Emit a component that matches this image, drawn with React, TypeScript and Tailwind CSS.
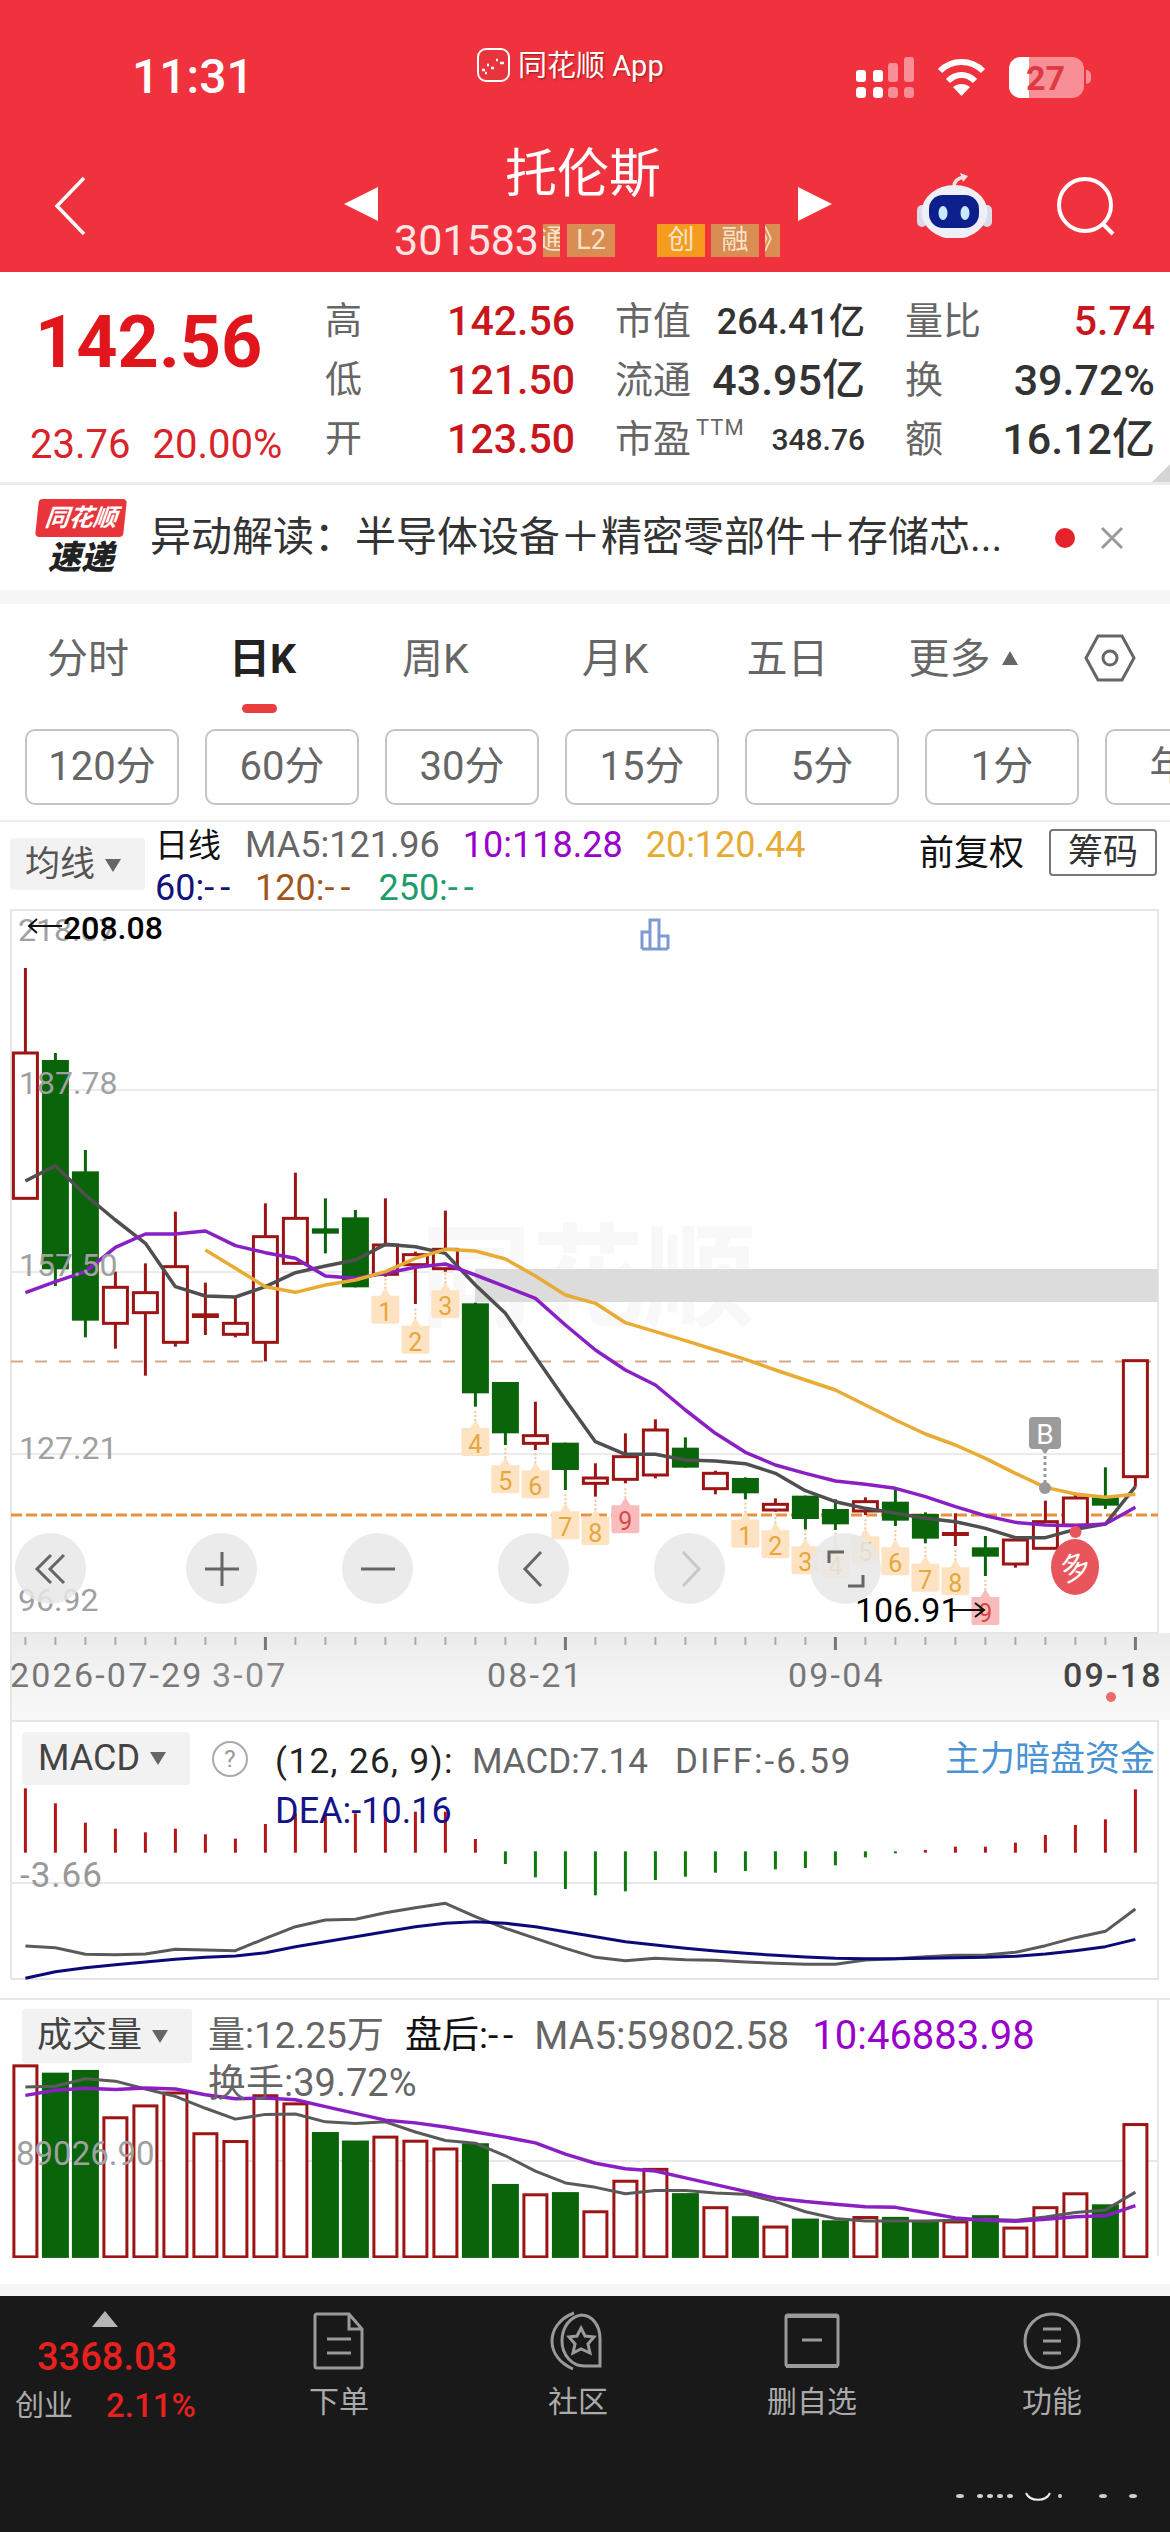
import React from "react";

const X = (i: number) => 25.4 + 30 * i;
const Y = (z: number) => 1150 + z / 3;
const MY = (z: number) => 1670 + z / 3;
const VY = (z: number) => 2000 + z / 2.947;

type C = [string, number, number, number, number];
const candles: C[] = [
  ["r", -546, -291, 145, 145],
  ["g", -291, -270, 358, 408],
  ["g", 0, 64, 512, 562],
  ["r", 365, 412, 520, 596],
  ["r", 340, 428, 488, 677],
  ["r", 185, 350, 577, 590],
  ["s", 398, 490, 504, 555],
  ["r", 440, 520, 553, 562],
  ["r", 160, 260, 577, 634],
  ["r", 68, 205, 340, 340],
  ["g", 145, 235, 251, 310],
  ["g", 180, 202, 412, 412],
  ["r", 145, 285, 373, 380],
  ["r", 305, 314, 344, 462],
  ["r", 182, 298, 356, 365],
  ["g", 458, 460, 730, 770],
  ["g", 696, 696, 850, 885],
  ["r", 755, 857, 880, 900],
  ["g", 878, 878, 960, 1020],
  ["r", 940, 984, 1000, 1040],
  ["r", 850, 920, 988, 1000],
  ["r", 808, 840, 975, 985],
  ["g", 862, 893, 953, 953],
  ["r", 962, 970, 1016, 1033],
  ["g", 982, 984, 1030, 1048],
  ["r", 1045, 1063, 1080, 1085],
  ["g", 1037, 1037, 1107, 1138],
  ["g", 1048, 1077, 1123, 1140],
  ["r", 1042, 1055, 1083, 1095],
  ["g", 1020, 1055, 1112, 1128],
  ["g", 1087, 1092, 1166, 1180],
  ["s", 1090, 1146, 1158, 1188],
  ["g", 1158, 1192, 1220, 1278],
  ["r", 1170, 1170, 1242, 1253],
  ["r", 1052, 1115, 1195, 1195],
  ["r", 1028, 1044, 1125, 1125],
  ["g", 952, 1042, 1067, 1077],
  ["r", 632, 632, 980, 1010],
];

const ma5 = [93, 47, 135, 210, 280, 410, 438, 441, 410, 368, 348, 330, 283, 290, 310, 405, 490, 620, 750, 875, 913, 913, 930, 933, 941, 970, 1022, 1055, 1075, 1090, 1105, 1115, 1135, 1163, 1163, 1138, 1122, 1010];
const ma10 = [428, 395, 365, 292, 252, 252, 243, 287, 308, 325, 378, 385, 370, 352, 342, 375, 410, 445, 525, 600, 660, 705, 780, 850, 907, 945, 970, 993, 1003, 1015, 1040, 1070, 1097, 1117, 1125, 1127, 1122, 1072];
const ma20 = [300, 355, 410, 427, 405, 390, 365, 325, 298, 303, 327, 378, 435, 460, 518, 545, 572, 600, 628, 660, 690, 720, 765, 810, 852, 885, 925, 970, 1012, 1032, 1042, 1033];

const badges: [number, number, string][] = [
  [12, 428, "1"], [13, 518, "2"], [14, 412, "3"], [15, 825, "4"], [16, 937, "5"], [17, 952, "6"],
  [18, 1075, "7"], [19, 1092, "8"], [20, 1057, "9"], [24, 1100, "1"], [25, 1132, "2"], [26, 1180, "3"],
  [27, 1190, "4"], [28, 1150, "5"], [29, 1183, "6"], [30, 1232, "7"], [31, 1243, "8"], [32, 1332, "9"],
];

const macdBars = [355, 400, 458, 476, 487, 476, 493, 506, 462, 430, 430, 430, 430, 425, 425, 507, 582, 622, 657, 676, 664, 630, 620, 608, 603, 598, 594, 586, 562, 550, 540, 530, 530, 518, 495, 465, 448, 358];
const macdGray = [828, 833, 853, 854, 852, 838, 840, 842, 805, 770, 750, 748, 728, 713, 700, 740, 775, 805, 835, 862, 872, 865, 869, 871, 876, 880, 883, 883, 870, 866, 860, 856, 855, 847, 827, 803, 784, 717];
const macdNavy = [925, 905, 893, 884, 876, 868, 862, 858, 848, 830, 815, 800, 785, 770, 760, 755, 760, 770, 785, 800, 815, 825, 835, 843, 850, 856, 861, 865, 866, 866, 865, 863, 862, 859, 852, 842, 830, 808];

const vol: [string, number][] = [["r", 200], ["g", 220], ["g", 212], ["r", 353], ["r", 318], ["r", 280], ["r", 400], ["r", 423], ["r", 288], ["r", 312], ["g", 395], ["g", 420], ["r", 410], ["r", 422], ["r", 445], ["g", 428], ["g", 548], ["r", 580], ["g", 572], ["r", 630], ["r", 540], ["r", 505], ["g", 575], ["r", 618], ["g", 643], ["r", 675], ["g", 650], ["g", 655], ["r", 647], ["g", 645], ["g", 655], ["r", 660], ["g", 640], ["r", 678], ["r", 618], ["r", 577], ["g", 608], ["r", 373]];
const volGray = [262, 260, 238, 245, 268, 290, 325, 357, 343, 342, 365, 370, 365, 395, 420, 428, 465, 510, 545, 558, 577, 567, 567, 575, 578, 600, 630, 650, 657, 657, 657, 655, 652, 655, 645, 632, 625, 572];
const volPurple = [287, 272, 266, 270, 265, 268, 285, 297, 295, 300, 320, 340, 360, 368, 380, 395, 410, 427, 460, 487, 503, 510, 530, 550, 570, 590, 600, 608, 615, 617, 632, 648, 655, 658, 652, 645, 642, 612];

const line = (vals: number[], map: (z: number) => number, start = 0) =>
  vals.map((v, k) => `${X(k + start)},${map(v)}`).join(" ");

const RED = "#9c1414";
const GREEN = "#0a640a";

function MainChart() {
  return (
    <svg viewBox="0 909 1170 811" className="absolute inset-0 h-[811px] w-[1170px]">
      <defs>
        <linearGradient id="strip" x1="0" y1="0" x2="0" y2="1">
          <stop offset="0" stopColor="#ebebeb" />
          <stop offset="0.55" stopColor="#f4f4f4" />
          <stop offset="1" stopColor="#f8f8f8" />
        </linearGradient>
      </defs>
      <rect x="10" y="1633" width="1160" height="87" fill="url(#strip)" />
      <path d="M11 1720V910H1158V1633M11 1633H1158" fill="none" stroke="#e6e6e6" strokeWidth="2" />
      <path d="M11 1090H1158M11 1272H1158M11 1454H1158" stroke="#ebebeb" strokeWidth="2" />
      <text x="420" y="1318" fontSize="112" fontWeight="700" fill="#f8f8f8">同花顺</text>
      <rect x="475" y="1269" width="683" height="33" fill="#dcdcdc" />
      <path d="M11 1361.5H1158" stroke="#d3a888" strokeWidth="2" strokeDasharray="12 12" />
      <path d="M11 1515H1158" stroke="#e8913f" strokeWidth="3" strokeDasharray="11 4" />
      {badges.map(([i, top, n], k) => {
        const x = X(i);
        const y = Y(top);
        const pink = n === "9";
        const fill = pink ? "#f8bcbc" : "#fde3c2";
        return (
          <g key={k}>
            <path d={`M${x - 14} ${y + 3}h9l5 -8l5 8h9v26a2 2 0 0 1 -2 2h-24a2 2 0 0 1 -2 -2z`} fill={fill} />
            <path d={`M${x} ${y - 14}v10`} stroke="#eec79a" strokeWidth="2" strokeDasharray="2 2" />
            <text x={x} y={y + 28} textAnchor="middle" fontSize="25" fill={pink ? "#d84a4a" : "#e8a63e"}>{n}</text>
          </g>
        );
      })}
      {candles.map(([t, wt, bt, bb, wb], i) => {
        const x = X(i);
        const c = t === "g" ? GREEN : RED;
        return (
          <g key={i}>
            <path d={`M${x} ${Y(wt)}V${Y(wb)}`} stroke={c} strokeWidth="3" />
            {t === "g" && <rect x={x - 13.5} y={Y(bt)} width="27" height={Y(bb) - Y(bt)} fill={c} />}
            {t === "r" && <rect x={x - 12} y={Y(bt)} width="24" height={Y(bb) - Y(bt)} fill="#fff" stroke={c} strokeWidth="3" />}
            {t === "s" && <rect x={x - 13.5} y={Y(bt)} width="27" height={Y(bb) - Y(bt)} fill={c} />}
          </g>
        );
      })}
      <polyline points={line(ma5, Y)} fill="none" stroke="#4f4f4f" strokeWidth="3.5" strokeLinejoin="round" />
      <polyline points={line(ma10, Y)} fill="none" stroke="#8a1fc4" strokeWidth="3.5" strokeLinejoin="round" />
      <polyline points={line(ma20, Y, 6)} fill="none" stroke="#e8ac35" strokeWidth="3.5" strokeLinejoin="round" />
      <g fill="#a0a0a0" fontSize="32">
        <text x="18" y="941">218.07</text>
        <text x="19" y="1094">187.78</text>
        <text x="19" y="1276">157.50</text>
        <text x="19" y="1459">127.21</text>
        <text x="18" y="1611">96.92</text>
      </g>
      <path d="M29 926H62M37 919L29 926L37 933" fill="none" stroke="#111" strokeWidth="2" />
      <text x="63" y="939" fontSize="32" fontWeight="500" fill="#000">208.08</text>
      <path d="M642 949V932H650V949M650 949V920H659V949M659 949V936H668V949M642 949H668" fill="none" stroke="#7d9bd0" strokeWidth="3" />
      <path d="M1045 1450V1483" stroke="#999" strokeWidth="3" strokeDasharray="3 3" />
      <circle cx="1045" cy="1488" r="6" fill="#999" />
      <path d="M1033 1417h24a4 4 0 0 1 4 4v24a4 4 0 0 1 -4 4h-8l-4 5l-4 -5h-8a4 4 0 0 1 -4 -4v-24a4 4 0 0 1 4 -4z" fill="#9b9b9b" />
      <text x="1045" y="1444" textAnchor="middle" fontSize="28" fill="#fff">B</text>
      <circle cx="1075.5" cy="1532" r="6" fill="#e8555a" />
      <ellipse cx="1075" cy="1567" rx="24" ry="28" fill="#e8555a" />
      <text x="1075" y="1578" textAnchor="middle" fontSize="30" fill="#fff" transform="rotate(-20 1075 1567)">多</text>
      <text x="855" y="1622" fontSize="34" fill="#000">106.91</text>
      <path d="M952 1610H984M975 1603L984 1610L975 1617" fill="none" stroke="#111" strokeWidth="2" />
      {candles.map((_, i) => {
        const major = i === 8 || i === 18 || i === 27 || i === 37;
        return <path key={i} d={`M${X(i)} 1637V${major ? 1650 : 1645}`} stroke={major ? "#777" : "#aaa"} strokeWidth={major ? 3 : 2} />;
      })}
      <g fontSize="34" fill="#777" letterSpacing="2.2">
        <text x="10" y="1687">2026-07-29</text>
        <text x="212" y="1687" fill="#888">3-07</text>
        <text x="487" y="1687">08-21</text>
        <text x="788" y="1687">09-04</text>
        <text x="1063" y="1687" fill="#444" fontWeight="500">09-18</text>
      </g>
      <circle cx="1111" cy="1697" r="5" fill="#ee6a6a" />
    </svg>
  );
}

function Round({ className, children }: { className: string; children: React.ReactNode }) {
  return (
    <div className={`absolute top-[624px] flex h-[71px] w-[71px] items-center justify-center rounded-full bg-[#e8e8e8]/85 ${className}`}>
      <svg viewBox="0 0 40 40" className="h-[40px] w-[40px]" fill="none" stroke="currentColor" strokeWidth="3">
        {children}
      </svg>
    </div>
  );
}

function MacdChart() {
  return (
    <svg viewBox="0 1720 1170 260" className="absolute inset-0 h-[260px] w-[1170px]">
      <path d="M11 1979V1721H1158V1979H11" fill="none" stroke="#e6e6e6" strokeWidth="2" />
      <path d="M11 1883H1158" stroke="#e8e8e8" strokeWidth="2" />
      {macdBars.map((z, i) => {
        const g = i >= 16 && i <= 29;
        return <rect key={i} x={X(i) - 1.5} width="3" y={g ? MY(544) : MY(z)} height={g ? MY(z) - MY(544) : MY(548) - MY(z)} fill={g ? "#0b7a0b" : "#b51414"} />;
      })}
      <text x="20" y="1887" fontSize="35" fill="#999" letterSpacing="1">-3.66</text>
      <polyline points={line(macdGray, MY)} fill="none" stroke="#5a5a5a" strokeWidth="3" strokeLinejoin="round" />
      <polyline points={line(macdNavy, MY)} fill="none" stroke="#0a0a78" strokeWidth="3" strokeLinejoin="round" />
    </svg>
  );
}

function VolChart() {
  return (
    <svg viewBox="0 2002 1170 258" className="absolute inset-0 h-[258px] w-[1170px]">
      <path d="M11 2163H1158" stroke="#e8e8e8" strokeWidth="2" />
      <path d="M1158 2002V2258" stroke="#e8e8e8" strokeWidth="2" />
      {vol.map(([t, z], i) =>
        t === "g" ? (
          <rect key={i} x={X(i) - 13.5} y={VY(z)} width="27" height={VY(763) - VY(z) + 1} fill={GREEN} />
        ) : (
          <rect key={i} x={X(i) - 11.5} y={VY(z)} width="23" height={VY(763) - VY(z)} fill="#fff" stroke={RED} strokeWidth="3" />
        )
      )}
      <text x="16" y="2167" fontSize="33" fill="#a0a0a0">89026.90</text>
      <polyline points={line(volGray, VY)} fill="none" stroke="#5a5a5a" strokeWidth="3" strokeLinejoin="round" />
      <polyline points={line(volPurple, VY)} fill="none" stroke="#8a1fc4" strokeWidth="3.5" strokeLinejoin="round" />
    </svg>
  );
}

function Robot() {
  return (
    <svg viewBox="0 0 75 66" className="ml-[85px] h-[66px] w-[75px]">
      <path d="M37 15c0-6 4-9 10-10" fill="none" stroke="#f3dfe2" strokeWidth="3.5" />
      <path d="M43 1L51 4L46 10Z" fill="#f3dfe2" />
      <rect x="0" y="33" width="10" height="22" rx="5" fill="#d9dce6" />
      <rect x="65" y="33" width="10" height="22" rx="5" fill="#d9dce6" />
      <ellipse cx="37.5" cy="40" rx="33" ry="27" fill="#eef0f6" />
      <rect x="12" y="23" width="50" height="33" rx="14" fill="#0d1f8c" />
      <ellipse cx="26" cy="41" rx="4.5" ry="7" fill="#c8e8ff" />
      <ellipse cx="48" cy="41" rx="4.5" ry="7" fill="#c8e8ff" />
    </svg>
  );
}

function Tag({ children, className }: { children: React.ReactNode; className: string }) {
  return <span className={`flex h-[33px] items-center justify-center overflow-hidden text-[27px] leading-none text-[#f7e3cb] ${className}`}>{children}</span>;
}

function Row({ children }: { children: React.ReactNode }) {
  return <div className="flex h-[59px] items-center justify-between whitespace-nowrap">{children}</div>;
}

function NavItem({ label, className, children }: { label: string; className: string; children: React.ReactNode }) {
  return (
    <div className={`flex w-[120px] flex-col items-center ${className}`}>
      <svg viewBox="0 0 60 60" className="h-[60px] w-[60px]" fill="none" stroke="#9a9a9a" strokeWidth="3">
        {children}
      </svg>
      <span className="mt-[13px] text-[30px] leading-[36px] text-[#aaa]">{label}</span>
    </div>
  );
}

export default function App() {
  const tab = "text-[41px] leading-[50px] text-[#666]";
  const chip = "flex h-[76px] w-[154px] shrink-0 items-center justify-center rounded-[10px] border-2 border-[#c4c4c4] text-[40px] text-[#666]";
  return (
    <div className="flex h-[2532px] w-[1170px] flex-col overflow-hidden bg-white font-[Roboto,'Noto_Sans_CJK_SC',sans-serif]">
      {/* red header */}
      <header className="h-[272px] shrink-0 bg-[#ef323d] text-white">
        <div className="flex h-[140px] pt-[48px]">
          <span className="ml-[132px] w-[345px] text-[48px] font-medium leading-[58px]">11:31</span>
          <svg viewBox="0 0 33 34" className="h-[34px] w-[33px]">
            <rect x="1" y="1" width="31" height="32" rx="8" fill="#e8343c" stroke="#fff" strokeWidth="2" />
            <path d="M5 22h3M10 17h2M14 20h3M19 12h2M23 15h4M8 25h2" stroke="#fff" strokeWidth="2.5" />
          </svg>
          <span className="ml-[8px] w-[160px] whitespace-nowrap text-[29px] leading-[36px] text-white [text-shadow:1px_1px_2px_rgba(80,0,0,0.5)]">同花顺 App</span>
          <svg viewBox="0 0 58 41" className="ml-[178px] mt-[9px] h-[41px] w-[58px]">
            <g fill="#fff">
              <rect x="0" y="13" width="10" height="12" rx="3" />
              <rect x="0" y="30" width="10" height="11" rx="3.5" />
              <rect x="17" y="13" width="10" height="12" rx="3" />
              <rect x="17" y="30" width="10" height="11" rx="3.5" />
            </g>
            <g fill="#f98f96">
              <rect x="32" y="6" width="10" height="19" rx="3" />
              <rect x="32" y="30" width="10" height="11" rx="3.5" />
              <rect x="48" y="0" width="10" height="25" rx="3" />
              <rect x="48" y="30" width="10" height="11" rx="3.5" />
            </g>
          </svg>
          <svg viewBox="0 0 49 38" className="ml-[23px] mt-[10px] h-[38px] w-[49px]" fill="none" stroke="#fff" strokeWidth="6">
            <path d="M3 13C15 1 34 1 46 13" />
            <path d="M11 23C19 15 30 15 38 23" />
            <path d="M24.5 38L16 29C21 25 28 25 33 29Z" fill="#fff" stroke="none" />
          </svg>
          <div className="relative ml-[23px] mt-[9px] flex h-[41px] w-[75px] items-center overflow-hidden rounded-[12px] bg-[#f98f96]">
            <div className="h-full w-[20px] bg-white" />
            <span className="absolute left-[17px] text-[34px] font-bold leading-none text-[#df3a44]">27</span>
          </div>
          <div className="ml-[2px] mt-[22px] h-[14px] w-[5px] rounded-r-full bg-[#f98f96]" />
        </div>
        <div className="flex h-[132px]">
          <svg viewBox="0 0 32 60" className="ml-[54px] mt-[36px] h-[60px] w-[32px]" fill="none" stroke="#fff" strokeWidth="3.5">
            <path d="M30 2L3 30L30 58" />
          </svg>
          <div className="ml-[258px] mt-[47px] h-0 w-0 border-y-[17px] border-r-[34px] border-y-transparent border-r-white" />
          <div className="ml-[16px] flex w-[404px] flex-col">
            <span className="mt-[4px] pl-[111px] text-[52px] leading-[62px]">托伦斯</span>
            <div className="mt-[18px] flex items-center">
              <span className="w-[144px] text-[43px] leading-[33px] text-[#fbe4e6]">301583</span>
              <Tag className="ml-[5px] w-[17px] bg-[#d98d52]">通</Tag>
              <Tag className="ml-[7px] w-[48px] bg-[#d98d52]">L2</Tag>
              <Tag className="ml-[42px] w-[48px] bg-[#f59b1e]">创</Tag>
              <Tag className="ml-[6px] w-[48px] bg-[#d98d52]">融</Tag>
              <Tag className="ml-[6px] w-[15px] bg-[#d98d52]">》</Tag>
            </div>
          </div>
          <div className="mt-[47px] h-0 w-0 border-y-[17px] border-l-[34px] border-y-transparent border-l-white" />
          <div className="mt-[32px]">
            <Robot />
          </div>
          <svg viewBox="0 0 60 60" className="ml-[65px] mt-[37px] h-[60px] w-[60px]" fill="none" stroke="#fff" strokeWidth="4">
            <circle cx="28" cy="28" r="26" />
            <path d="M46 47L56 57" />
          </svg>
        </div>
      </header>

      {/* quote */}
      <section className="relative flex h-[213px] shrink-0 border-b-[3px] border-[#ececec] pt-[20px]">
        <div className="flex w-[325px] flex-col">
          <span className="pl-[35px] pt-[7px] text-[72px] font-bold leading-[88px] text-[#e0161c]">142.56</span>
          <div className="mt-[36px] flex pl-[30px] text-[40px] leading-[44px] text-[#d8232a]">
            <span>23.76</span>
            <span className="ml-[22px]">20.00%</span>
          </div>
        </div>
        <div className="flex w-[250px] flex-col text-[#c9161c]">
          {[["高", "142.56"], ["低", "121.50"], ["开", "123.50"]].map(([a, b]) => (
            <Row key={a}>
              <span className="text-[37px] text-[#666]">{a}</span>
              <span className="text-[41px] font-medium">{b}</span>
            </Row>
          ))}
        </div>
        <div className="ml-[40px] flex w-[250px] flex-col text-[#333]">
          <Row>
            <span className="text-[38px] text-[#666]">市值</span>
            <span className="text-[36px] font-medium">264.41亿</span>
          </Row>
          <Row>
            <span className="text-[38px] text-[#666]">流通</span>
            <span className="text-[43px] font-medium">43.95亿</span>
          </Row>
          <Row>
            <span className="flex items-start text-[38px] text-[#666]">
              市盈<span className="ml-[5px] mt-[2px] text-[22px] leading-[30px] tracking-[1px]">TTM</span>
            </span>
            <span className="text-[30px] font-medium">348.76</span>
          </Row>
        </div>
        <div className="ml-[40px] flex w-[250px] flex-col text-[#333]">
          <Row>
            <span className="text-[38px] text-[#666]">量比</span>
            <span className="text-[41px] font-medium text-[#c9161c]">5.74</span>
          </Row>
          <Row>
            <span className="text-[38px] text-[#666]">换</span>
            <span className="text-[43px] font-medium">39.72%</span>
          </Row>
          <Row>
            <span className="text-[38px] text-[#666]">额</span>
            <span className="text-[43px] font-medium">16.12亿</span>
          </Row>
        </div>
        <div className="absolute bottom-0 right-0 h-0 w-0 border-b-[18px] border-l-[18px] border-b-[#d5d5d5] border-l-transparent" />
      </section>

      {/* ticker */}
      <section className="flex h-[105px] shrink-0 items-center">
        <div className="ml-[37px] flex w-[88px] flex-col items-center">
          <span className="flex h-[38px] w-[88px] -skew-x-6 items-center justify-center rounded-[4px] bg-[#e8353b] text-[24px] font-bold italic leading-none text-white">同花顺</span>
          <span className="mt-[3px] text-[33px] font-black italic leading-[36px] text-[#222]">速递</span>
        </div>
        <span className="ml-[25px] w-[860px] whitespace-nowrap text-[41px] leading-none text-[#333]">异动解读：半导体设备＋精密零部件＋存储芯...</span>
        <div className="ml-[45px] h-[20px] w-[20px] rounded-full bg-[#e5222c]" />
        <svg viewBox="0 0 24 24" className="ml-[25px] h-[24px] w-[24px]" fill="none" stroke="#9a9a9a" strokeWidth="3">
          <path d="M2 2L22 22M22 2L2 22" />
        </svg>
      </section>
      <div className="h-[14px] shrink-0 bg-[#f6f6f6]" />

      {/* tabs */}
      <nav className="flex h-[113px] shrink-0 items-start pt-[30px]">
        <span className={`ml-[47px] ${tab}`}>分时</span>
        <span className="relative ml-[100px] text-[41px] font-bold leading-[50px] text-[#222]">
          日K
          <span className="absolute left-[13px] top-[70px] h-[9px] w-[35px] rounded-full bg-[#ea3d3d]" />
        </span>
        <span className={`ml-[106px] ${tab}`}>周K</span>
        <span className={`ml-[113px] ${tab}`}>月K</span>
        <span className={`ml-[98px] ${tab}`}>五日</span>
        <span className={`ml-[80px] ${tab}`}>更多</span>
        <span className="ml-[11px] mt-[17px] h-0 w-0 border-x-[8px] border-b-[14px] border-x-transparent border-b-[#666]" />
        <svg viewBox="0 0 52 48" className="ml-[66px] h-[48px] w-[52px]" fill="none" stroke="#666" strokeWidth="3">
          <path d="M14 2H38L50 24L38 46H14L2 24Z" />
          <circle cx="26" cy="24" r="7" />
        </svg>
      </nav>

      {/* period chips */}
      <div className="flex h-[105px] shrink-0 gap-[26px] border-b-2 border-[#ececec] pl-[25px] pt-[12px]">
        {["120分", "60分", "30分", "15分", "5分", "1分", "年K"].map((t) => (
          <span key={t} className={chip}>{t}</span>
        ))}
      </div>

      {/* legend */}
      <div className="flex h-[87px] shrink-0 whitespace-nowrap text-[36px] leading-[43px]">
        <div className="ml-[10px] mt-[16px] flex h-[52px] w-[135px] items-center rounded-[4px] bg-[#f2f2f2] pl-[15px] text-[35px] text-[#555]">
          均线
          <span className="ml-[10px] mt-[3px] h-0 w-0 border-x-[8px] border-t-[13px] border-x-transparent border-t-[#666]" />
        </div>
        <div className="ml-[10px] flex w-[745px] flex-col pt-[2px]">
          <div className="flex items-center">
            <span className="text-[33px] text-[#111]">日线</span>
            <span className="ml-[24px] text-[#666]">MA5:121.96</span>
            <span className="ml-[23px] text-[#9900cc]">10:118.28</span>
            <span className="ml-[23px] text-[#e5ab35]">20:120.44</span>
          </div>
          <div className="flex">
            <span className="text-[#12127a]">60:<span className="tracking-[6px]">--</span></span>
            <span className="ml-[19px] text-[#a0561a]">120:<span className="tracking-[6px]">--</span></span>
            <span className="ml-[22px] text-[#1f9c6c]">250:<span className="tracking-[6px]">--</span></span>
          </div>
        </div>
        <span className="ml-[19px] mt-[9px] text-[35px] leading-[46px] text-[#111]">前复权</span>
        <span className="ml-[25px] mt-[7px] flex h-[47px] w-[108px] items-center justify-center rounded-[4px] border-2 border-[#777] text-[35px] text-[#333]">筹码</span>
      </div>

      {/* main chart */}
      <div className="relative h-[811px] shrink-0 text-[#666]">
        <MainChart />
        <Round className="left-[15px]">
          <path d="M20 6L6 20L20 34M33 6L19 20L33 34" />
        </Round>
        <Round className="left-[186px]">
          <path d="M20 3V37M3 20H37" />
        </Round>
        <Round className="left-[342px]">
          <path d="M3 20H37" />
        </Round>
        <Round className="left-[498px]">
          <path d="M27 3L11 20L27 37" />
        </Round>
        <Round className="left-[654px] text-[#c8c8c8]">
          <path d="M13 3L29 20L13 37" />
        </Round>
        <Round className="left-[810px]">
          <path d="M3 14V3H18M37 26V37H22" />
        </Round>
      </div>

      {/* MACD */}
      <section className="relative h-[260px] shrink-0">
        <MacdChart />
        <div className="relative flex whitespace-nowrap pt-[12px] text-[35px] leading-[53px]">
          <div className="ml-[22px] flex h-[53px] w-[168px] items-center rounded-[4px] bg-[#f2f2f2] pl-[16px] text-[36px] text-[#444]">
            MACD
            <span className="ml-[10px] h-0 w-0 border-x-[8px] border-t-[13px] border-x-transparent border-t-[#666]" />
          </div>
          <div className="ml-[22px] mt-[9px] flex h-[36px] w-[36px] items-center justify-center rounded-full border-2 border-[#aaa] text-[24px] leading-none text-[#999]">?</div>
          <div className="ml-[27px] flex w-[670px] flex-col pt-[3px]">
            <div className="flex">
              <span className="tracking-[1.4px] text-[#222]">(12, 26, 9):</span>
              <span className="ml-[18px] text-[#666]">MACD:7.14</span>
              <span className="ml-[27px] tracking-[2px] text-[#666]">DIFF:-6.59</span>
            </div>
            <span className="-mt-[3px] text-[36px] text-[#14148a]">DEA:-10.16</span>
          </div>
          <span className="mt-[1px] text-[35px] text-[#4a93d2]">主力暗盘资金</span>
        </div>
      </section>

      <div className="h-[20px] shrink-0 border-b-2 border-[#e8e8e8]" />

      {/* volume */}
      <section className="relative h-[258px] shrink-0">
        <VolChart />
        <div className="relative flex whitespace-nowrap pt-[9px] text-[37px] leading-[54px]">
          <div className="ml-[22px] flex h-[54px] w-[170px] items-center rounded-[4px] bg-[#f2f2f2] pl-[15px] text-[35px] text-[#444]">
            成交量
            <span className="ml-[10px] h-0 w-0 border-x-[8px] border-t-[13px] border-x-transparent border-t-[#666]" />
          </div>
          <div className="ml-[16px] flex flex-col">
            <div className="flex items-center">
              <span className="text-[#666]">量:12.25万</span>
              <span className="ml-[21px] text-[#111]">盘后:<span className="tracking-[5px]">--</span></span>
              <span className="ml-[16px] text-[39px] text-[#666]">MA5:59802.58</span>
              <span className="ml-[23px] text-[40px] text-[#9900cc]">10:46883.98</span>
            </div>
            <span className="-mt-[7px] text-[38px] text-[#666]">换手:39.72%</span>
          </div>
        </div>
      </section>

      <div className="h-[26px] shrink-0" />
      <div className="h-[12px] shrink-0 bg-[#f5f5f5]" />

      {/* bottom bar */}
      <footer className="relative flex min-h-0 flex-1 bg-[#191919] pt-[15px]">
        <div className="flex w-[260px] flex-col">
          <span className="ml-[92px] h-0 w-0 border-x-[13px] border-b-[16px] border-x-transparent border-b-[#b5b5b5]" />
          <span className="ml-[37px] mt-[7px] text-[38px] font-medium leading-[46px] text-[#e8201e]">3368.03</span>
          <div className="mt-[4px] flex items-center pl-[15px]">
            <span className="text-[29px] leading-[44px] text-[#aaa]">创业</span>
            <span className="ml-[33px] text-[33px] font-medium leading-[44px] text-[#e8201e]">2.11%</span>
          </div>
        </div>
        <NavItem label="下单" className="ml-[19px]">
          <path d="M8 3H40L53 18V55a2 2 0 0 1 -2 2H8a2 2 0 0 1 -2 -2V5a2 2 0 0 1 2 -2zM40 3V18H53" />
          <path d="M18 28H42M18 42H42" strokeWidth="3" />
        </NavItem>
        <NavItem label="社区" className="ml-[119px]">
          <path d="M26 2C10 8 4 20 4 30C4 42 12 52 25 58" />
          <path d="M33 4C22 6 14 16 14 30C14 44 24 55 36 55H52V28C52 14 44 4 33 4Z" />
          <path d="M33 17L37 25L46 26L40 33L42 42L33 38L25 42L27 33L21 26L29 25Z" />
        </NavItem>
        <NavItem label="删自选" className="ml-[114px]">
          <rect x="4" y="4" width="52" height="51" rx="2" />
          <path d="M4 5H56M4 55H56" strokeWidth="4" />
          <path d="M20 29H40" strokeWidth="3" />
        </NavItem>
        <NavItem label="功能" className="ml-[120px]">
          <ellipse cx="30" cy="30" rx="27" ry="27" />
          <path d="M21 18H39M21 30H39M21 42H39" strokeWidth="3" />
        </NavItem>
        <svg viewBox="0 0 190 36" className="absolute left-[950px] top-[175px] h-[36px] w-[190px]">
          <g fill="#cfcfcf">
            <ellipse cx="10" cy="25" rx="4" ry="2" />
            <ellipse cx="30" cy="25" rx="3" ry="2" />
            <ellipse cx="40" cy="25" rx="3" ry="2" />
            <ellipse cx="50" cy="25" rx="3" ry="2" />
            <ellipse cx="60" cy="25" rx="3" ry="2" />
            <ellipse cx="110" cy="25" rx="2" ry="2" />
            <ellipse cx="153" cy="25" rx="4" ry="2" />
            <ellipse cx="183" cy="25" rx="4" ry="2" />
          </g>
          <path d="M76 22C80 31 96 31 100 22" fill="none" stroke="#eee" strokeWidth="2" />
        </svg>
      </footer>
    </div>
  );
}
